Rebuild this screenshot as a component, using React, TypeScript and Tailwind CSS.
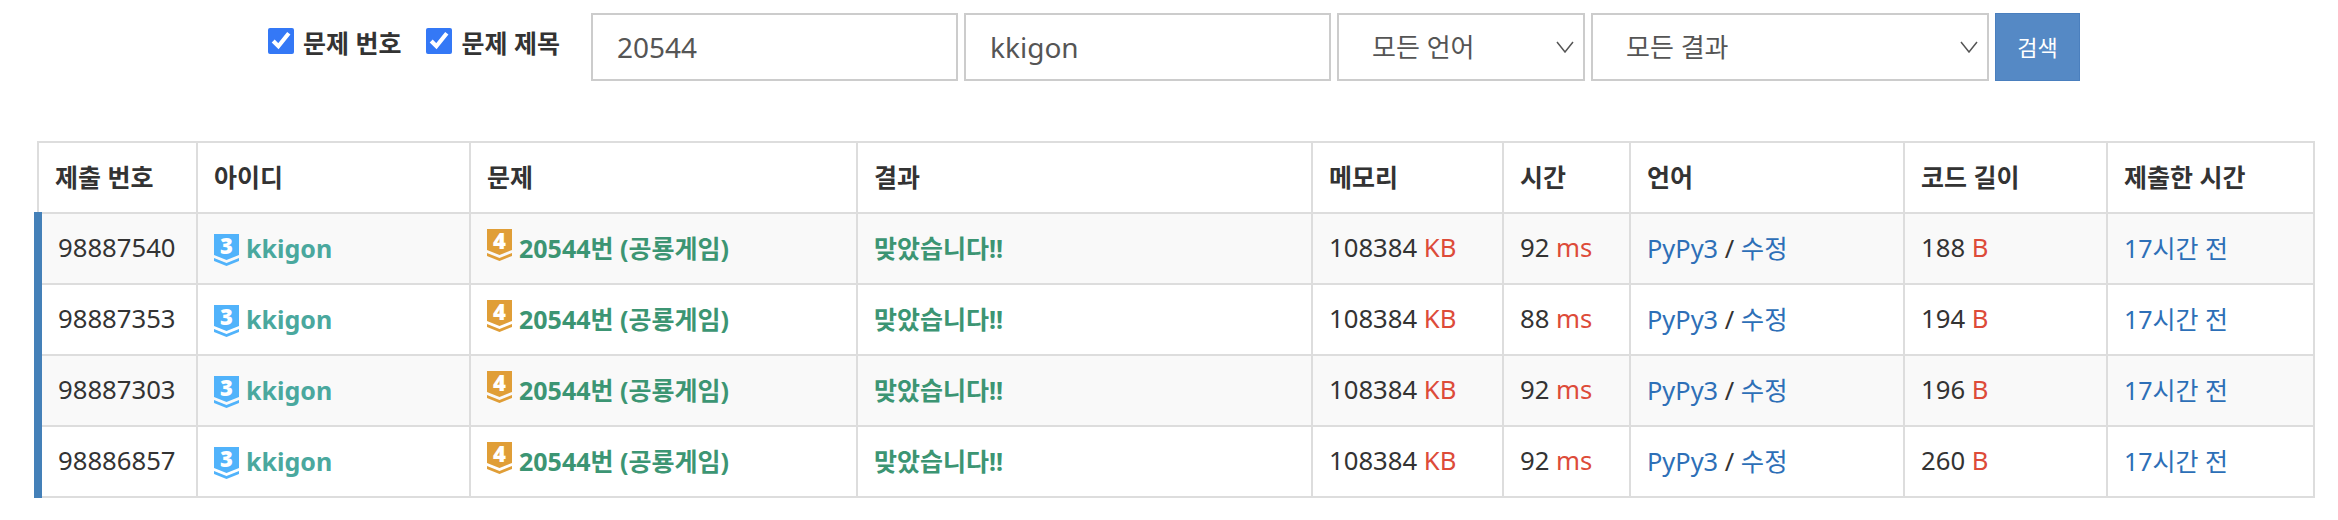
const ROWS = [
  { id: '98887540', time: '92', len: '188' },
  { id: '98887353', time: '88', len: '194' },
  { id: '98887303', time: '92', len: '196' },
  { id: '98886857', time: '92', len: '260' },
]

const HEADERS = ['제출 번호', '아이디', '문제', '결과', '메모리', '시간', '언어', '코드 길이', '제출한 시간']
const COLS = ['w-[159px]', 'w-[273px]', 'w-[387px]', 'w-[455px]', 'w-[191px]', 'w-[127px]', 'w-[274px]', 'w-[203px]', 'w-[207px]']

function Badge({ level, color, className }: { level: string; color: string; className: string }) {
  return (
    <svg width="25" height="32" viewBox="0 0 25 32" className={`overflow-visible ${className}`} aria-hidden="true">
      <path d="M0 0H25V21L12.5 26L0 21Z" fill={color} />
      <path d="M0 24L12.5 29L25 24V27L12.5 32L0 27Z" fill={color} />
      <text x="12.5" y="20" textAnchor="middle" fontSize="22" fontWeight="800" fill="#fff" fontFamily="'Open Sans', sans-serif">
        {level}
      </text>
    </svg>
  )
}

export default function App() {
  return (
    <div className="w-[2338px] h-[520px] bg-white text-[#333] overflow-hidden font-['Noto_Sans','Noto_Sans_CJK_KR',sans-serif]">
      <form className="flex h-[81px] pt-[13px] pl-[268px]">
        <label className="flex items-start gap-[9px] pt-[15px] text-[25px] leading-[28px] font-bold">
          <input type="checkbox" defaultChecked className="w-[26px] h-[26px] accent-[#3478f6]" />
          <span className="relative top-[1px]">문제 번호</span>
        </label>
        <label className="flex items-start gap-[10px] pt-[15px] ml-[24px] text-[25px] leading-[28px] font-bold">
          <input type="checkbox" defaultChecked className="w-[26px] h-[26px] accent-[#3478f6]" />
          <span className="relative top-[1px]">문제 제목</span>
        </label>
        <input
          defaultValue="20544"
          className="w-[367px] h-[68px] ml-[31px] px-[24px] border-2 border-[#ccc] text-[28px] text-[#555] outline-none"
        />
        <input
          defaultValue="kkigon"
          className="w-[367px] h-[68px] ml-[6px] px-[24px] border-2 border-[#ccc] text-[28px] text-[#555] outline-none"
        />
        <div className="flex items-center justify-between w-[248px] h-[68px] ml-[6px] pl-[33px] pr-[9px] border-2 border-[#ccc] text-[26px] text-[#555]">
          모든 언어
          <svg width="18" height="12" viewBox="0 0 18 12" fill="none" stroke="#555" strokeWidth="1.5" aria-hidden="true">
            <path d="M1 1L9 11L17 1" />
          </svg>
        </div>
        <div className="flex items-center justify-between w-[398px] h-[68px] ml-[6px] pl-[33px] pr-[9px] border-2 border-[#ccc] text-[26px] text-[#555]">
          모든 결과
          <svg width="18" height="12" viewBox="0 0 18 12" fill="none" stroke="#555" strokeWidth="1.5" aria-hidden="true">
            <path d="M1 1L9 11L17 1" />
          </svg>
        </div>
        <button type="button" className="w-[85px] h-[68px] ml-[6px] bg-[#5589c5] border border-[#4a7fbe] text-white text-[22px]">
          검색
        </button>
      </form>

      <table className="ml-[34px] mt-[60px] w-[2277px] table-fixed border-collapse text-[25px]">
        <colgroup>
          {COLS.map((c) => (
            <col key={c} className={c} />
          ))}
        </colgroup>
        <thead>
          <tr className="h-[71px]">
            {HEADERS.map((h) => (
              <th key={h} className="border-2 border-[#ddd] px-[16px] text-left font-bold">
                {h}
              </th>
            ))}
          </tr>
        </thead>
        <tbody>
          {ROWS.map((r, i) => (
            <tr key={r.id} className={i % 2 === 0 ? 'h-[71px] bg-[#f9f9f9]' : 'h-[71px] bg-white'}>
              <td className="border-2 border-[#ddd] border-l-8 border-l-[#4480b8] px-[16px] text-[25.7px]">{r.id}</td>
              <td className="border-2 border-[#ddd] px-[16px]">
                <span className="flex items-center font-bold text-[#4aa89e]">
                  <Badge level="3" color="#51b3fb" className="mr-[7px] mt-[3px]" />
                  kkigon
                </span>
              </td>
              <td className="border-2 border-[#ddd] px-[16px]">
                <span className="flex items-center font-bold text-[#3c9573]">
                  <Badge level="4" color="#e09e37" className="mr-[7px] -mt-[7px]" />
                  20544번 (공룡게임)
                </span>
              </td>
              <td className="border-2 border-[#ddd] px-[16px] font-bold text-[#3c9573]">맞았습니다!!</td>
              <td className="border-2 border-[#ddd] px-[16px] text-[25.7px]">
                108384 <span className="text-[#dd4b39]">KB</span>
              </td>
              <td className="border-2 border-[#ddd] px-[16px] text-[25.7px]">
                {r.time} <span className="text-[#dd4b39]">ms</span>
              </td>
              <td className="border-2 border-[#ddd] px-[16px] text-[25.4px]">
                <span className="text-[#2d6fb7]">PyPy3</span> / <span className="text-[#2d6fb7]">수정</span>
              </td>
              <td className="border-2 border-[#ddd] px-[16px] text-[25.7px]">
                {r.len} <span className="text-[#dd4b39]">B</span>
              </td>
              <td className="border-2 border-[#ddd] px-[16px] text-[#2d6fb7]">17시간 전</td>
            </tr>
          ))}
        </tbody>
      </table>
    </div>
  )
}
